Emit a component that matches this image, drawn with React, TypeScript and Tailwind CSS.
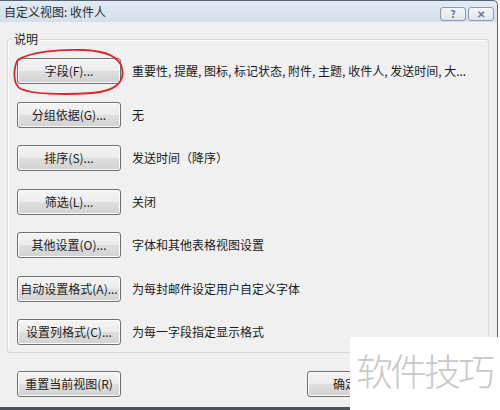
import React from "react";

// One row of the view settings: a button and a one-line summary beside it
const rows: { label: string; summary: string }[] = [
  { label: "字段(F)...", summary: "重要性, 提醒, 图标, 标记状态, 附件, 主题, 收件人, 发送时间, 大..." },
  { label: "分组依据(G)...", summary: "无" },
  { label: "排序(S)...", summary: "发送时间（降序）" },
  { label: "筛选(L)...", summary: "关闭" },
  { label: "其他设置(O)...", summary: "字体和其他表格视图设置" },
  { label: "自动设置格式(A)...", summary: "为每封邮件设定用户自定义字体" },
  { label: "设置列格式(C)...", summary: "为每一字段指定显示格式" },
];

function WinButton({ children, className = "" }: { children: React.ReactNode; className?: string }) {
  return (
    <button
      className={
        "h-[26px] shrink-0 rounded-[3px] border border-[#707070] bg-[linear-gradient(#f4f4f4,#ececec_48%,#dedede_52%,#d2d2d2)] shadow-[inset_0_0_0_1px_#fbfbfb] text-[12px] text-[#1c1c1c] leading-none flex items-center justify-center " +
        className
      }
    >
      {children}
    </button>
  );
}

function CaptionButton({ children }: { children: React.ReactNode }) {
  return (
    <div className="w-[26px] h-[14px] rounded-[3px] border border-[#8d9aab] bg-[linear-gradient(#f3f6fa,#dfe6ee)] flex items-center justify-center text-[10px] leading-none text-[#6b7684] font-bold">
      {children}
    </div>
  );
}

export default function App() {
  return (
    <div className="w-[500px] h-[410px] bg-white relative overflow-hidden font-['Noto_Sans_CJK_SC',sans-serif]">
      <div className="w-[498px] h-[410px] flex flex-col bg-[#d9e4ef] border-r border-t border-[#59626d] rounded-tr-[5px]">
        {/* caption */}
        <div className="h-[21px] shrink-0 flex items-center bg-[linear-gradient(#e2ebf5,#d3dfeb)] pl-[4px] pr-[3px] rounded-tr-[5px]">
          <span className="text-[12px] text-[#2a2a2a] leading-none">自定义视图: 收件人</span>
          <div className="ml-auto flex gap-[2px] mt-[5px]">
            <CaptionButton>?</CaptionButton>
            <CaptionButton>✕</CaptionButton>
          </div>
        </div>

        {/* client area */}
        <div className="flex-1 flex flex-col bg-[#f0f0f0] border-b-[3px] border-[#4b535c]">
          <div className="relative mt-[17px] ml-[7px] mr-[8px] border border-[#d3dce3] rounded-[3px] shadow-[inset_1px_1px_0_#ffffff] pt-[18px] pb-[7px] pl-[9px] flex flex-col gap-[17.5px]">
            <span className="absolute left-[4px] top-[-9px] px-[2px] bg-[#f0f0f0] text-[12px] leading-[16px] text-[#1a1a1a]">
              说明
            </span>
            {rows.map((r) => (
              <div key={r.label} className="flex items-center">
                <WinButton className="w-[104px]">{r.label}</WinButton>
                <span className="ml-[11px] text-[12px] text-[#1a1a1a] whitespace-nowrap">{r.summary}</span>
              </div>
            ))}
          </div>

          <div className="mt-[18px] flex items-center pl-[17px]">
            <WinButton className="w-[104px]">重置当前视图(R)</WinButton>
            <WinButton className="w-[76px] ml-[186px]">确定</WinButton>
            <WinButton className="w-[76px] ml-[8px]">取消</WinButton>
          </div>
        </div>
      </div>

      {/* hand-drawn highlight around the first button */}
      <svg className="absolute left-0 top-0 pointer-events-none" width="140" height="110" viewBox="0 0 140 110">
        <path
          d="M18 60 C30 52 58 49 84 50 C106 51 119 56 122 68 C125 82 116 91 92 93 C62 95 32 94 21 89 C13 85 13 71 17 61"
          fill="none"
          stroke="#d8262b"
          strokeWidth="1.8"
          strokeLinecap="round"
        />
      </svg>

      {/* watermark */}
      <div className="absolute left-[350px] top-[337px] w-[150px] h-[73px] bg-white pl-[6px] pt-[15px]">
        <span className="text-[37px] leading-none tracking-[-3px] font-light text-[#c8c8c8] whitespace-nowrap">软件技巧</span>
      </div>
    </div>
  );
}
